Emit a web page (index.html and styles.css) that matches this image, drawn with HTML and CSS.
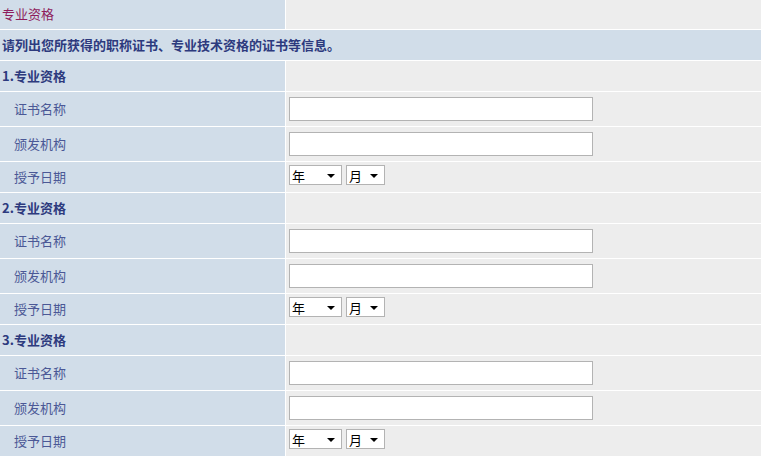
FILE: index.html
```html
<!DOCTYPE html>
<html lang="zh-CN">
  <head>
    <meta charset="UTF-8" />
    <title>专业资格</title>
    <link rel="stylesheet" href="styles.css">
  </head>
  <body>
    <table class="qual-table">
      <colgroup>
        <col class="col-label" />
        <col class="col-field" />
      </colgroup>
      <tr>
        <td class="label head">专业资格</td>
        <td class="field"></td>
      </tr>
      <tr>
        <td class="label note" colspan="2">请列出您所获得的职称证书、专业技术资格的证书等信息。</td>
      </tr>

      <tr class="row-title">
        <td class="label title">1.专业资格</td>
        <td class="field"></td>
      </tr>
      <tr class="row-input">
        <td class="label item">证书名称</td>
        <td class="field"><input type="text" class="text-box" /></td>
      </tr>
      <tr class="row-input">
        <td class="label item">颁发机构</td>
        <td class="field"><input type="text" class="text-box" /></td>
      </tr>
      <tr class="row-date">
        <td class="label item">授予日期</td>
        <td class="field">
          <span class="pick pick-year"><select><option>年</option></select></span>
          <span class="pick pick-month"><select><option>月</option></select></span>
        </td>
      </tr>

      <tr class="row-title">
        <td class="label title">2.专业资格</td>
        <td class="field"></td>
      </tr>
      <tr class="row-input">
        <td class="label item">证书名称</td>
        <td class="field"><input type="text" class="text-box" /></td>
      </tr>
      <tr class="row-input">
        <td class="label item">颁发机构</td>
        <td class="field"><input type="text" class="text-box" /></td>
      </tr>
      <tr class="row-date">
        <td class="label item">授予日期</td>
        <td class="field">
          <span class="pick pick-year"><select><option>年</option></select></span>
          <span class="pick pick-month"><select><option>月</option></select></span>
        </td>
      </tr>

      <tr class="row-title">
        <td class="label title">3.专业资格</td>
        <td class="field"></td>
      </tr>
      <tr class="row-input">
        <td class="label item">证书名称</td>
        <td class="field"><input type="text" class="text-box" /></td>
      </tr>
      <tr class="row-input">
        <td class="label item">颁发机构</td>
        <td class="field"><input type="text" class="text-box" /></td>
      </tr>
      <tr class="row-date">
        <td class="label item">授予日期</td>
        <td class="field">
          <span class="pick pick-year"><select><option>年</option></select></span>
          <span class="pick pick-month"><select><option>月</option></select></span>
        </td>
      </tr>
    </table>
  </body>
</html>
```

FILE: styles.css
```css
body {
  margin: 0;
  background: #fff;
  font-family: "Noto Sans CJK SC", "Liberation Sans", sans-serif;
  font-size: 13px;
  overflow: hidden;
}

.qual-table {
  table-layout: fixed;
  border-collapse: separate;
  border-spacing: 1px;
  margin: -2px 0 0 -1px;
  width: 764px;
  background: #fff;
}

.col-label {
  width: 285px;
}

.qual-table td {
  padding: 0 2px;
  height: 30px;
  line-height: 16px;
  vertical-align: middle;
  white-space: nowrap;
}

.label {
  background: #d1dde9;
}

.field {
  background: #ededed;
}

.head {
  color: #8e1c5c;
}

.note,
.title {
  color: #2d3a7e;
  font-weight: bold;
}

.item {
  color: #4b5896;
  padding-left: 14px !important;
}

.row-input td {
  height: 34px;
}

.text-box {
  display: block;
  box-sizing: border-box;
  width: 304px;
  height: 24px;
  margin: 0 0 0 1px;
  border: 1px solid #b3b3b3;
  background: #fff;
  padding: 0 3px;
}

.row-date .field {
  padding-left: 3px;
  font-size: 0;
}

.pick {
  position: relative;
  display: inline-block;
  vertical-align: middle;
  margin-right: 4px;
}

.pick select {
  appearance: none;
  -webkit-appearance: none;
  box-sizing: border-box;
  height: 20px;
  border: 1px solid #b3b3b3;
  background: #fff;
  color: #000;
  font-family: "Noto Sans CJK SC", sans-serif;
  font-size: 13px;
  padding: 0 0 0 2px;
  border-radius: 0;
}

.pick-year select {
  width: 53px;
}

.pick-month select {
  width: 39px;
}

/* seta do select */
.pick::after {
  content: "";
  position: absolute;
  right: 7px;
  top: 9px;
  border-left: 4px solid transparent;
  border-right: 4px solid transparent;
  border-top: 4px solid #000;
  pointer-events: none;
}
```
